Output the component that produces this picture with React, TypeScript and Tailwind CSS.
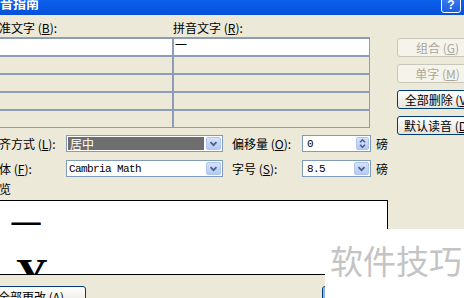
import React from "react";

const Chevron = () => (
  <svg width="9" height="6" viewBox="0 0 9 6">
    <path d="M1.5 1.2 L4.5 4.2 L7.5 1.2" fill="none" stroke="#4D6185" strokeWidth="1.8" />
  </svg>
);

const DropButton = () => (
  <div className="w-[15px] shrink-0 flex items-center justify-center rounded-[2px] border border-[#AFC4F1] bg-linear-to-b from-[#D5E2FD] to-[#B4C9F5]">
    <Chevron />
  </div>
);

const SpinButton = () => (
  <div className="w-[13px] shrink-0 flex items-center justify-center rounded-[2px] border border-[#AFC4F1] bg-linear-to-b from-[#D5E2FD] to-[#B4C9F5]">
    <svg width="11" height="11" viewBox="0 0 11 11">
      <path d="M3 4.3 L5.5 1.8 L8 4.3" fill="none" stroke="#4D6185" strokeWidth="1.6" />
      <path d="M3 6.7 L5.5 9.2 L8 6.7" fill="none" stroke="#4D6185" strokeWidth="1.6" />
    </svg>
  </div>
);

type SideButtonProps = { label: string; keyChar: string; disabled?: boolean };

const SideButton = ({ label, keyChar, disabled }: SideButtonProps) => (
  <div
    className={
      disabled
        ? "h-[19px] w-full flex items-center justify-center whitespace-nowrap rounded-[3px] border border-[#C9C7BA] bg-[#F5F4EA] text-[#ACA899]"
        : "h-[19px] w-full flex items-center justify-center whitespace-nowrap rounded-[3px] border border-[#003C74] bg-linear-to-b from-white to-[#E6E4DA] text-black"
    }
  >
    {label} (<span className="underline">{keyChar}</span>)
  </div>
);

const gridRows = [0, 1, 2, 3, 4];

export default function App() {
  return (
    <div className="relative w-[464px] h-[298px] overflow-hidden bg-[#ECE9D8] font-['Noto_Sans_CJK_SC',sans-serif] text-[12px] leading-[12px] text-black">
      {/* title bar */}
      <div className="h-[15px] flex items-start overflow-hidden bg-linear-to-b from-[#0B60EC] to-[#064FD9]">
        <span className="ml-[-13px] mt-[-4px] text-[13px] leading-[13px] font-bold text-white whitespace-nowrap">
          拼音指南
        </span>
        <div className="ml-auto mr-[3px] mt-[-4px] w-[20px] h-[17px] flex items-end justify-center pb-[1px] rounded-[3px] border border-white bg-linear-to-b from-[#3F7DF1] to-[#1D5DE0] text-white font-['Liberation_Sans',sans-serif] font-bold text-[12px] leading-[12px]">
          ?
        </div>
      </div>

      <div className="flex">
        {/* left part of the dialog */}
        <div className="ml-[-13px] w-[401px] shrink-0 flex flex-col">
          <div className="flex h-[22px] pt-[7px] whitespace-nowrap">
            <span className="w-[186px] shrink-0">
              基准文字 (<span className="underline">B</span>):
            </span>
            <span>
              拼音文字 (<span className="underline">R</span>):
            </span>
          </div>

          <div className="w-[383px] flex flex-col gap-[2px] pt-[2px] pb-[1px] pr-[1px] bg-[#8C9DB8]">
            {gridRows.map((i) => (
              <div key={i} className="flex gap-[2px] h-[16px]">
                <div className={i === 0 ? "w-[185px] shrink-0 bg-white" : "w-[185px] shrink-0 bg-[#ECE9D8]"} />
                <div className={i === 0 ? "flex-1 pl-[1px] bg-white" : "flex-1 bg-[#ECE9D8]"}>
                  {i === 0 ? "一" : null}
                </div>
              </div>
            ))}
          </div>

          <div className="mt-[7px] flex flex-col gap-[8px] whitespace-nowrap">
            <div className="flex items-center h-[17px]">
              <span className="w-[79px] shrink-0">
                对齐方式 (<span className="underline">L</span>):
              </span>
              <div className="w-[157px] shrink-0 h-full flex gap-[2px] p-[1px] border border-[#7F9DB9] bg-white">
                <div className="flex-1 flex items-center pl-[2px] bg-[#6E6E6E] text-white">居中</div>
                <DropButton />
              </div>
              <span className="ml-[9px] w-[70px] shrink-0">
                偏移量 (<span className="underline">O</span>):
              </span>
              <div className="w-[69px] shrink-0 h-full flex p-[1px] border border-[#7F9DB9] bg-white">
                <div className="flex-1 flex items-center pl-[3px] font-['Liberation_Mono',monospace] text-[11px] tracking-[-0.6px]">
                  0
                </div>
                <SpinButton />
              </div>
              <span className="ml-[5px]">磅</span>
            </div>

            <div className="flex items-center h-[17px]">
              <span className="w-[79px] shrink-0">
                字体 (<span className="underline">F</span>):
              </span>
              <div className="w-[157px] shrink-0 h-full flex gap-[2px] p-[1px] border border-[#7F9DB9] bg-white">
                <div className="flex-1 flex items-center pl-[1px] font-['Liberation_Mono',monospace] text-[11px] tracking-[-0.6px]">
                  Cambria Math
                </div>
                <DropButton />
              </div>
              <span className="ml-[9px] w-[70px] shrink-0">
                字号 (<span className="underline">S</span>):
              </span>
              <div className="w-[69px] shrink-0 h-full flex p-[1px] border border-[#7F9DB9] bg-white">
                <div className="flex-1 flex items-center pl-[3px] font-['Liberation_Mono',monospace] text-[11px] tracking-[-0.6px]">
                  8.5
                </div>
                <DropButton />
              </div>
              <span className="ml-[5px]">磅</span>
            </div>
          </div>

          <div className="h-[23px] pt-[6px]">预览</div>

          <div className="h-[75px] flex flex-col items-start pt-[5px] overflow-hidden border border-black bg-white">
            <span className="pl-[22px] text-[32px] leading-[32px]">一</span>
            <span className="mt-[15px] pl-[28px] font-['Liberation_Serif',serif] font-bold text-[44px] leading-[44px]">
              Y
            </span>
          </div>

          <div className="mt-[11px] flex whitespace-nowrap">
            <div className="ml-[-11px] w-[110px] shrink-0 h-[22px] flex justify-center pt-[4px] rounded-[3px] border border-[#003C74] bg-linear-to-b from-white to-[#E6E4DA]">
              全部更改 (<span className="underline">A</span>)
            </div>
            <div className="ml-[236px] w-[75px] shrink-0 h-[22px] rounded-[3px] border border-[#003C74] bg-white shadow-[inset_0_0_0_2px_#8DB2EE]" />
          </div>
        </div>

        {/* right button column */}
        <div className="ml-[9px] w-[81px] shrink-0 flex flex-col gap-[7px] pt-[23px]">
          <SideButton label="组合" keyChar="G" disabled />
          <SideButton label="单字" keyChar="M" disabled />
          <SideButton label="全部删除" keyChar="V" />
          <SideButton label="默认读音" keyChar="D" />
        </div>
      </div>

      {/* watermark over the corner */}
      <div className="absolute left-[325px] top-[229px] w-[139px] h-[69px] bg-white pl-[5px] pt-[15px] text-[33px] leading-[33px] text-[#C4C4C4] whitespace-nowrap">
        软件技巧
      </div>
    </div>
  );
}
